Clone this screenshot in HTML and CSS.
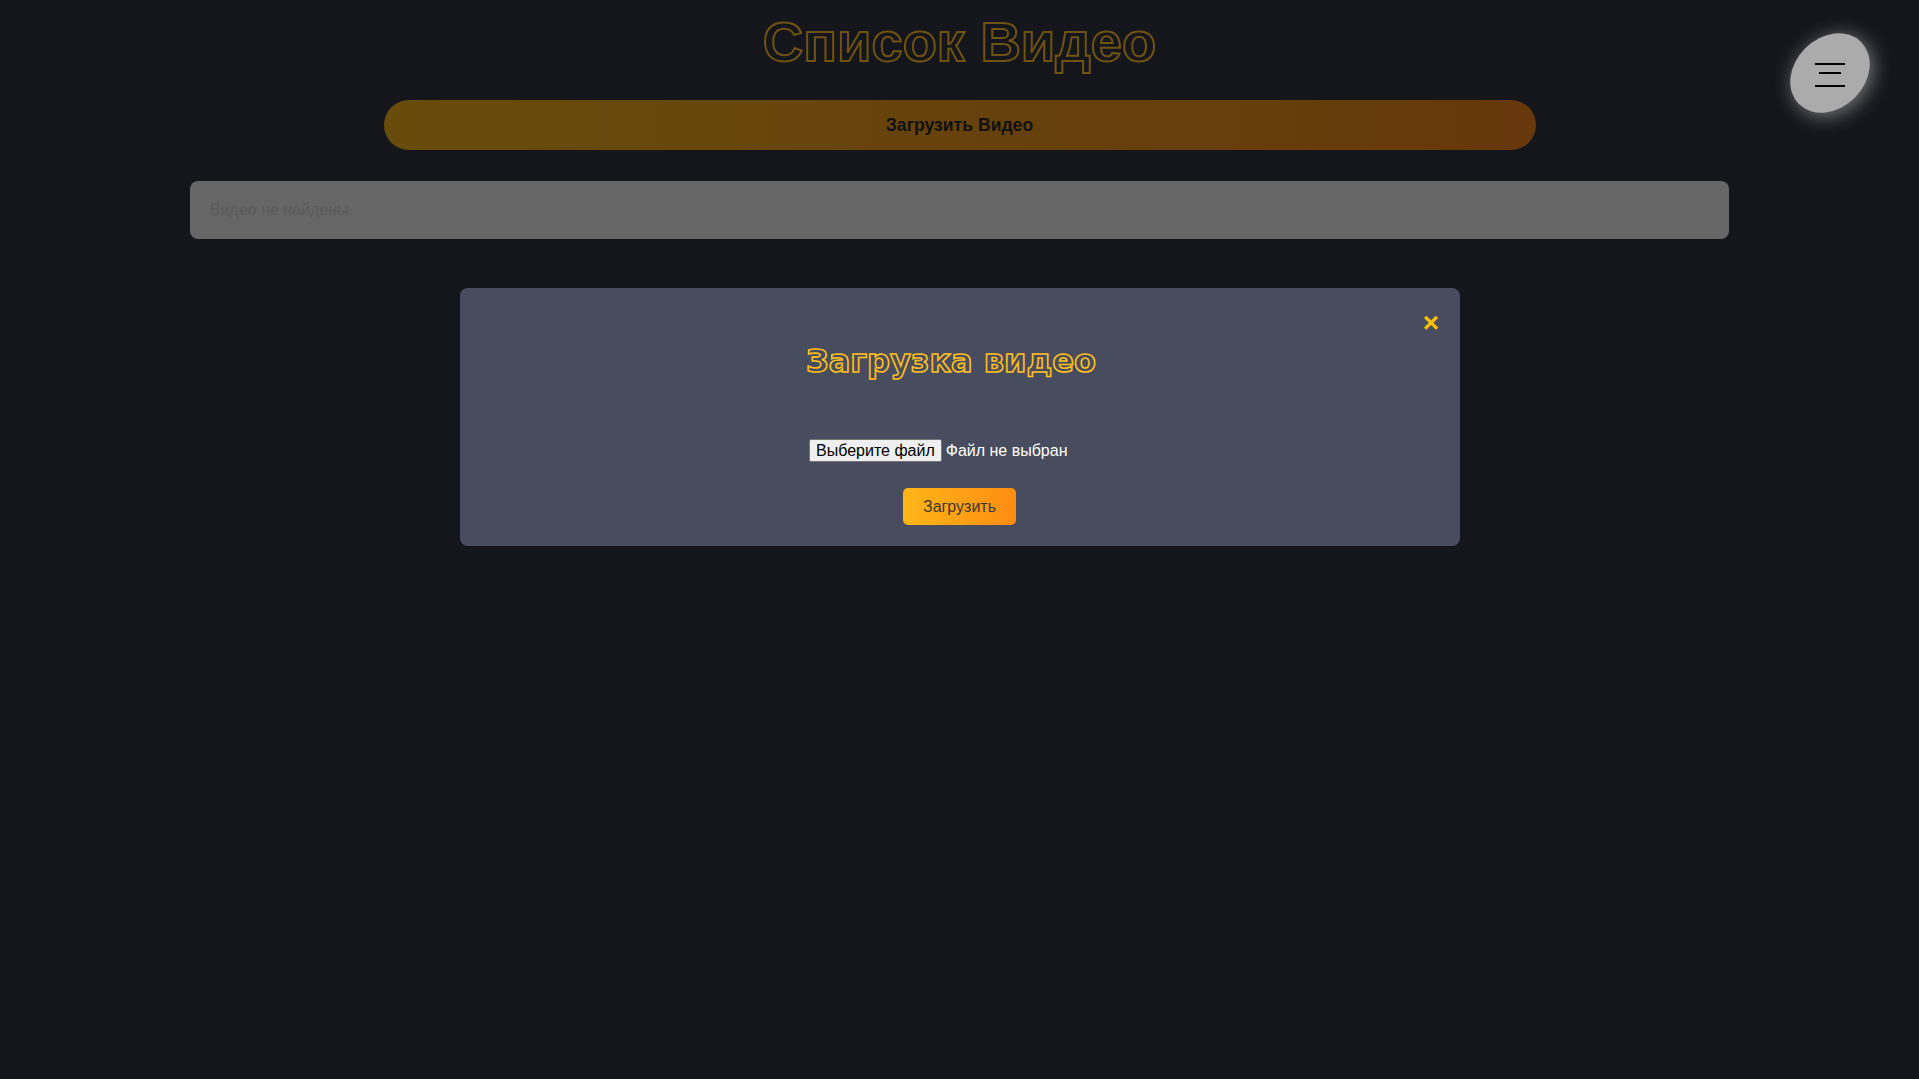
FILE: index.html
```html
<!DOCTYPE html>
<html lang="ru">
<head>
<meta charset="utf-8">
<title>Список Видео</title>
<link rel="stylesheet" href="styles.css">
</head>
<body>
<button class="menu-btn" aria-label="Меню">
  <span class="line line-a"></span>
  <span class="line line-b"></span>
  <span class="line line-c"></span>
</button>
<main class="page">
  <h1 class="page-title">Список Видео</h1>
  <button class="upload-bar">Загрузить Видео</button>
  <div class="video-list">Видео не найдены.</div>

  <section class="modal">
    <div class="modal-head">
      <h2 class="modal-title">Загрузка видео</h2>
      <span class="modal-close">×</span>
    </div>
    <form class="upload-form">
      <label class="file">
        <input type="file" class="file-input">
        <span class="file-btn">Выберите файл</span>
        <span class="file-name">Файл не выбран</span>
      </label>
      <button type="button" class="submit-btn">Загрузить</button>
    </form>
  </section>
</main>
</body>
</html>
```
FILE: styles.css
```css
html, body {
  margin: 0;
  padding: 0;
}
body {
  background: #15161b;
  font-family: "Liberation Sans", Arial, sans-serif;
  min-height: 1079px;
}
.page {
  padding-top: 10px;
  display: flex;
  flex-direction: column;
  align-items: center;
}
.page-title {
  margin: 0;
  font-size: 56px;
  line-height: 64px;
  font-weight: bold;
  color: transparent;
  -webkit-text-stroke: 2px #6e5313;
  text-align: center;
}
.upload-bar {
  margin-top: 26px;
  width: 1152px;
  height: 50px;
  border: none;
  border-radius: 25px;
  background: linear-gradient(to right, #684c0c, #66380b);
  color: #111111;
  font-family: "Liberation Sans", Arial, sans-serif;
  font-size: 17.6px;
  font-weight: bold;
  padding: 0;
}
.video-list {
  margin-top: 31px;
  width: 1539px;
  box-sizing: border-box;
  padding: 20px;
  background: #666666;
  border-radius: 8px;
  color: #5b5b5b;
  font-size: 16px;
  line-height: 18px;
}
.modal {
  margin-top: 49px;
  width: 1000px;
  box-sizing: border-box;
  padding: 20px 20px 21px;
  background: #474d5e;
  border-radius: 8px;
}
.modal-head {
  display: flex;
  align-items: flex-start;
}
.modal-title {
  flex: 1;
  margin: 33px 0 27px;
  font-family: "DejaVu Sans", sans-serif;
  font-size: 32px;
  line-height: 41px;
  font-weight: bold;
  text-align: center;
  color: transparent;
  -webkit-text-stroke: 1.6px #ffbf1c;
}
.modal-close {
  width: 17px;
  margin-top: 1px;
  font-size: 28px;
  line-height: 28px;
  font-weight: bold;
  color: #ffc107;
  text-align: center;
  cursor: pointer;
}
.upload-form {
  display: flex;
  flex-direction: column;
  align-items: center;
}
.file {
  margin-top: 30px;
  width: 301px;
  display: flex;
  align-items: center;
  font-size: 16px;
}
.file-input {
  display: none;
}
.file-btn {
  background: #efefef;
  border: 1px solid #767676;
  border-radius: 2px;
  padding: 1px 6px;
  line-height: 19px;
  color: #000;
  margin-right: 4px;
  white-space: nowrap;
}
.file-name {
  color: #ffffff;
  white-space: nowrap;
}
.submit-btn {
  margin-top: 26px;
  padding: 10px 20px;
  border: none;
  border-radius: 5px;
  background: linear-gradient(to right, #ffb617, #ff8c13);
  color: #3b3631;
  font-family: "Liberation Sans", Arial, sans-serif;
  font-size: 16px;
  line-height: 17px;
}
.menu-btn {
  position: absolute;
  top: 33px;
  left: 1790px;
  width: 80px;
  height: 80px;
  padding: 0;
  border: none;
  background: transparent;
}
.menu-btn::before {
  content: "";
  position: absolute;
  left: -4px;
  top: 5px;
  width: 88px;
  height: 70px;
  border-radius: 50%;
  background: #ababab;
  transform: rotate(-45deg);
  box-shadow: 0 4px 20px rgba(255, 255, 255, 0.45);
}
.line {
  position: absolute;
  height: 2px;
  background: #000;
}
.line-a {
  left: 25px;
  width: 30px;
  top: 30px;
}
.line-b {
  left: 29px;
  width: 22px;
  top: 39px;
}
.line-c {
  left: 25px;
  width: 30px;
  top: 52px;
}
```
